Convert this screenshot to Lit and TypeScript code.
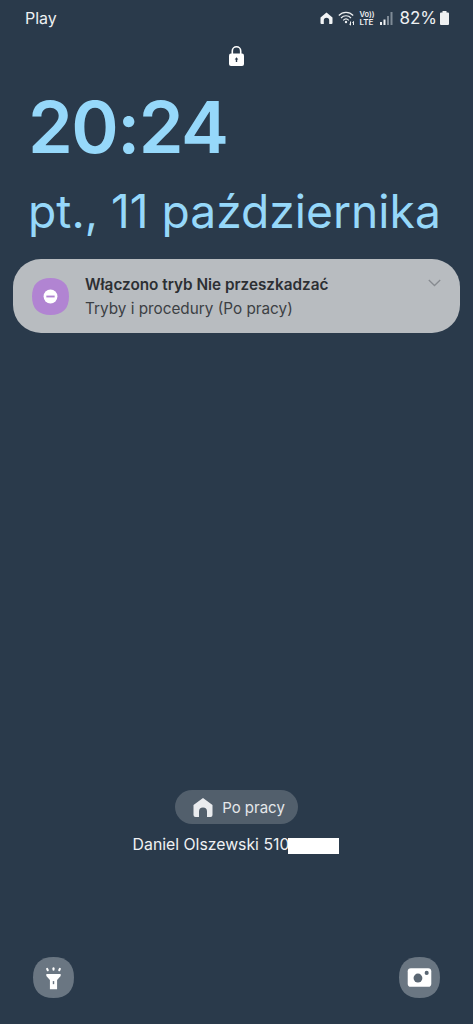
import { LitElement, html, css, svg } from "lit";
import { customElement } from "lit/decorators.js";

const squircle = (fill: string) => svg`<path fill=${fill} d="M20 0C33 0 40 7 40 20C40 33 33 40 20 40C7 40 0 33 0 20C0 7 7 0 20 0Z"/>`;

@customElement("app-root")
export class AppRoot extends LitElement {
  static styles = css`
    :host { display: block; width: 473px; height: 1024px; background: #2a3a4b; color: #fff; font-family: Inter, "Noto Sans", sans-serif; overflow: hidden; }
    .page { height: 1024px; display: flex; flex-direction: column; box-sizing: border-box; }
    .status { height: 36px; display: flex; align-items: center; padding: 0 24px 0 25px; font-size: 16px; color: #eef0f2; }
    .status .sp { flex: 1; }
    .status svg { display: block; flex: none; }
    .icons { display: flex; align-items: center; }
    .pct { font-size: 17px; margin: 0 3px 0 6px; }
    .lock { display: flex; justify-content: center; margin-top: 10px; height: 22px; }
    .clock { margin: 14px 0 0 28px; font-size: 72px; font-weight: 600; line-height: 90px; color: #96d8fa; letter-spacing: -1.5px; }
    .date { margin: 12px 0 0 28px; font-size: 46.2px; font-weight: 400; line-height: 54px; color: #96d8fa; white-space: nowrap; }
    .card { margin: 21px 13px 0; height: 74px; border-radius: 28px; background: #b8bcc0; display: flex; align-items: center; padding: 0 19px; box-sizing: border-box; position: relative; }
    .app { width: 37px; height: 37px; flex: none; display: block; }
    .txt { margin-left: 16px; display: flex; flex-direction: column; gap: 5px; color: #2c2f33; font-size: 15.3px; line-height: 19px; }
    .t { font-weight: 600; }
    .s { color: #3c4044; }
    .chev { position: absolute; right: 19px; top: 20px; }
    .grow { flex: 1; }
    .pill { align-self: center; width: 123px; height: 34px; border-radius: 17px; background: #525f6c; display: flex; align-items: center; justify-content: center; gap: 9px; font-size: 15px; color: #e4e7ea; box-sizing: border-box; padding-left: 5px; }
    .owner { margin-top: 11px; height: 20px; display: flex; justify-content: center; font-size: 15.8px; line-height: 20px; color: #f0f1f3; padding-right: 1px; }
    .mask { display: inline-block; width: 51px; height: 16px; margin-top: 3px; margin-left: -1px; background: #fff; }
    .bottom { display: flex; justify-content: space-between; padding: 0 33px; margin-top: 102px; margin-bottom: 26px; }
    .btn { width: 41px; height: 41px; display: block; }
  `;

  render() {
    return html`<div class="page">
      <div class="status">
        <span>Play</span><span class="sp"></span>
        <div class="icons">
          <svg width="13" height="12" viewBox="0 0 13 12"><path fill="#f2f4f6" d="M6.5 .5 12.500 5.500V11a1 1 0 0 1-1 1H9.200V8.500a2.700 2.700 0 0 0-5.400 0V12H1.500a1 1 0 0 1-1-1V5.500Z"/></svg>
          <svg style="margin-left:5px" width="18" height="15" viewBox="0 0 18 15" fill="none" stroke="#eef0f2" stroke-width="1.200"><path d="M.8 4.500C4.800 .3 11.200 .3 15.200 4.500M3 7C5.800 4 10.200 4 13 7M5.200 9.300C6.800 7.700 9.200 7.700 10.800 9.300"/><circle cx="8" cy="11" r="1.200" fill="#eef0f2" stroke="none"/><path d="M12.500 10.500v3.500M11.300 13l1.200 1.200M15.500 14v-3.500M14.400 11.600l1.100-1.100" stroke-width="1"/></svg>
          <svg style="margin-left:3px" width="16" height="16" viewBox="0 0 16 16" fill="#eef0f2"><text x="0.500" y="7" font-family="Inter, sans-serif" font-size="7.500" font-weight="600">Vo))</text><text x="0.500" y="15" font-family="Inter, sans-serif" font-size="8" font-weight="600">LTE</text></svg>
          <svg style="margin-left:5px" width="13" height="13" viewBox="0 0 13 13"><rect x="0" y="10" width="2" height="3" fill="#eef0f2"/><rect x="3.500" y="7.500" width="2" height="5.500" fill="#eef0f2"/><rect x="7" y="4" width="2" height="9" fill="#7e8a96"/><rect x="10.500" y="0" width="2" height="13" fill="#7e8a96"/></svg>
          <span class="pct">82%</span>
          <svg width="9" height="14" viewBox="0 0 9 14"><path fill="#eef0f2" d="M2.500 0h4v1.500H8a1 1 0 0 1 1 1V13a1 1 0 0 1-1 1H1a1 1 0 0 1-1-1V2.500a1 1 0 0 1 1-1h1.500Z"/></svg>
        </div>
      </div>
      <div class="lock">
        <svg width="15" height="20" viewBox="0 0 15 20"><path fill="none" stroke="#fff" stroke-width="1.600" d="M3.300 8V5a4.200 4.200 0 0 1 8.400 0V8"/><rect x="0" y="7.500" width="15" height="12.500" rx="2" fill="#fff"/><path fill="#2a3a4b" d="M7.500 11.200 9.300 13.500H8.200V16H6.800V13.500H5.700Z"/></svg>
      </div>
      <div class="clock">20:24</div>
      <div class="date">pt., 11 października</div>
      <div class="card">
        <svg class="app" viewBox="0 0 40 40">${squircle("#b184d2")}<circle cx="20" cy="20" r="7.500" fill="#fff"/><rect x="15.500" y="19" width="9" height="2" fill="#b184d2"/></svg>
        <div class="txt"><span class="t">Włączono tryb Nie przeszkadzać</span><span class="s">Tryby i procedury (Po pracy)</span></div>
        <svg class="chev" width="13" height="8" viewBox="0 0 13 8" fill="none" stroke="#878b90" stroke-width="1.300"><path d="M.8 1 6.500 6.500 12.200 1"/></svg>
      </div>
      <div class="grow"></div>
      <div class="pill">
        <svg width="20" height="19" viewBox="0 0 20 19"><path fill="#e9ebee" d="M10 0 19.500 7V17a2 2 0 0 1-2 2H14V13.500a4 4 0 0 0-8 0V19H2.500a2 2 0 0 1-2-2V7Z"/></svg>
        <span>Po pracy</span>
      </div>
      <div class="owner"><span>Daniel Olszewski 510</span><span class="mask"></span></div>
      <div class="bottom">
        <svg class="btn" viewBox="0 0 40 40">${squircle("#6a7682")}<path fill="#fff" d="M13 16.500H27V18.500L23.500 22.500V31.500H16.500V22.500L13 18.500Z"/><rect x="19.300" y="23.500" width="1.400" height="3" fill="#6a7682"/><rect x="19" y="10" width="2" height="3.500" rx="1" fill="#fff"/><rect x="13" y="10.500" width="2" height="3.500" rx="1" fill="#fff" transform="rotate(-25 14 12)"/><rect x="25" y="10.500" width="2" height="3.500" rx="1" fill="#fff" transform="rotate(25 26 12)"/></svg>
        <svg class="btn" viewBox="0 0 40 40">${squircle("#6a7682")}<rect x="8.500" y="11" width="23" height="18" rx="3" fill="#fff"/><circle cx="18.500" cy="20.500" r="4.300" fill="#5a6672"/><circle cx="27" cy="15.500" r="2" fill="#5a6672"/></svg>
      </div>
    </div>`;
  }
}
